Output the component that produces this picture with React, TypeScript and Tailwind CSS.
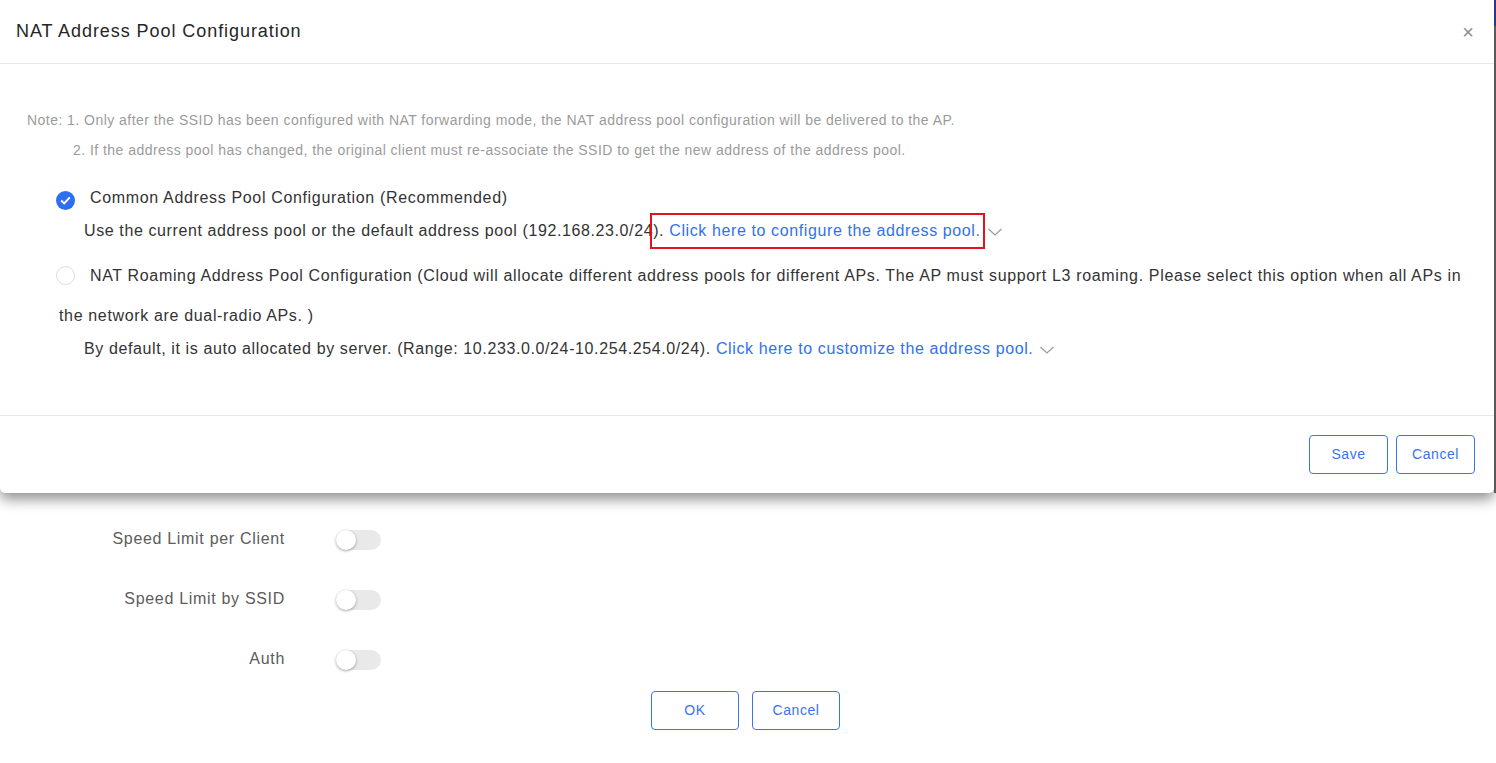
import React from 'react'

const font = { fontFamily: '"Liberation Sans", Arial, sans-serif' }

function Toggle() {
  return (
    <div className="relative h-[20px] w-[45px] rounded-full bg-[#e9e9e9]">
      <div className="absolute left-0 top-0 h-[20px] w-[20px] rounded-full bg-white shadow-[0_1px_3px_rgba(0,0,0,0.35)]" />
    </div>
  )
}

function Chevron() {
  return (
    <svg width="16" height="10" viewBox="0 0 16 10" className="ml-[6px] inline-block align-middle">
      <path d="M1.5 2 L8 8 L14.5 2" fill="none" stroke="#9a9a9a" strokeWidth="1.2" />
    </svg>
  )
}

function OutlineButton({ children, w }: { children: React.ReactNode; w: string }) {
  return (
    <button className={`${w} h-[39px] rounded-[4px] border border-[#3b72f2] bg-white text-[14px] tracking-[0.04em] text-[#3b72f2]`}>
      {children}
    </button>
  )
}

export default function App() {
  const rows = ['Speed Limit per Client', 'Speed Limit by SSID', 'Auth']

  return (
    <div className="relative h-[763px] w-[1496px] overflow-hidden bg-white" style={font}>
      {/* page behind the dialog */}
      <div className="pt-[450px]">
        <div className="flex h-[60px] items-center">
          <div className="w-[285px]" />
          <div className="ml-[51px]">
            <Toggle />
          </div>
        </div>
        {rows.map(r => (
          <div key={r} className="flex h-[60px] items-center">
            <div className="w-[285px] pb-[2px] text-right text-[16px] tracking-[0.043em] text-[#5c5c5c]">{r}</div>
            <div className="ml-[51px]">
              <Toggle />
            </div>
          </div>
        ))}
        <div className="mt-px flex justify-center gap-[13px] pr-[5px]">
          <OutlineButton w="w-[88px]">OK</OutlineButton>
          <OutlineButton w="w-[88px]">Cancel</OutlineButton>
        </div>
      </div>

      {/* dialog */}
      <div className="absolute left-0 top-0 w-[1494px] rounded-b-[5px] bg-white shadow-[0_6px_14px_rgba(0,0,0,0.45)]">
        <div className="flex h-[64px] items-center justify-between border-b border-[#e8e8e8] pl-[16px] pr-[20px]">
          <h1 className="text-[18px] tracking-[0.052em] text-[#262626]">NAT Address Pool Configuration</h1>
          <span className="text-[20px] leading-none text-[#8c8c8c]">×</span>
        </div>

        <div className="pb-[53px] pt-[41px]">
          <div className="pl-[27px] text-[14px] leading-[30px] tracking-[0.033em] text-[#9b9b9b]">
            <p>
              Note: 1. Only after the SSID has been configured with NAT forwarding mode, the NAT address pool
              configuration will be delivered to the AP.
            </p>
            <p className="pl-[46px]">
              2. If the address pool has changed, the original client must re-associate the SSID to get the new
              address of the address pool.
            </p>
          </div>

          <div className="mt-[13px] pl-[56px] pr-[30px] text-[16px] tracking-[0.041em] text-[#333]">
            <div className="leading-[40px]">
              <span className="mr-[15px] inline-flex h-[19px] w-[19px] items-center justify-center rounded-full bg-[#2e6ff2] align-[-2px]">
                <svg width="11" height="9" viewBox="0 0 11 9">
                  <path d="M1.2 4.6 L4.2 7.4 L9.8 1.4" fill="none" stroke="white" strokeWidth="2" />
                </svg>
              </span>
              Common Address Pool Configuration (Recommended)
            </div>
            <div className="pl-[28px] leading-[26px] tracking-[0.038em]">
              Use the current address pool or the default address pool (192.168.23.0/24
              <span className="relative">
                <span className="pointer-events-none absolute -bottom-[10px] -left-[3px] -right-[4px] -top-[9px] border-2 border-[#e5111f]" />
                ). <span className="text-[#3171f0]">Click here to configure the address pool.</span>
              </span>
              <Chevron />
            </div>

            <div className="ml-[3px] mt-[12px] leading-[40px]">
              <span className="-ml-[3px] mr-[15px] inline-block h-[19px] w-[19px] rounded-full border border-[#dcdcdc] bg-white align-[-4px]" />
              NAT Roaming Address Pool Configuration (Cloud will allocate different address pools for different APs.
              The AP must support L3 roaming. Please select this option when all APs in the network are dual-radio
              APs. )
            </div>
            <div className="pl-[28px] leading-[26px] tracking-[0.038em]">
              By default, it is auto allocated by server. (Range: 10.233.0.0/24-10.254.254.0/24).{' '}
              <span className="text-[#3171f0]">Click here to customize the address pool.</span>
              <Chevron />
            </div>
          </div>
        </div>

        <div className="flex h-[78px] items-center justify-end gap-[8px] border-t border-[#e8e8e8] pr-[19px]">
          <OutlineButton w="w-[79px]">Save</OutlineButton>
          <OutlineButton w="w-[79px]">Cancel</OutlineButton>
        </div>
      </div>

      <div className="absolute right-0 top-0 h-[493px] w-[2px] bg-[#5a5a5a]">
        <div className="h-[26px] bg-[#1f3c8f]" />
      </div>
    </div>
  )
}
